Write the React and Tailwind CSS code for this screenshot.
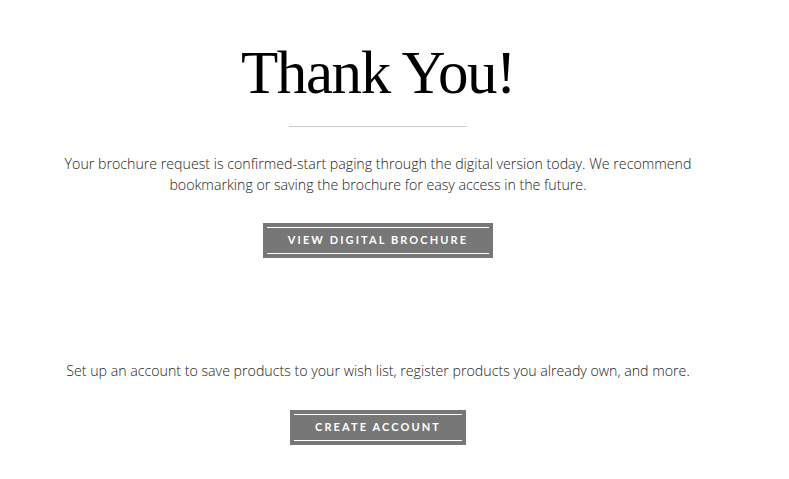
import React from 'react';

const OutlinedButton = ({ label, width }) => (
  <button
    className={`${width} h-[35px] bg-[#777777] p-[4px] cursor-pointer`}
  >
    <span
      className="flex items-center justify-center h-full border-y border-white text-white text-[11px] font-bold tracking-[2.1px] uppercase"
      style={{ fontFamily: 'Lato, sans-serif' }}
    >
      {label}
    </span>
  </button>
);

const App = () => {
  return (
    <div className="w-[789px] h-[479px] bg-white overflow-hidden">
      <div className="w-[756px] flex flex-col items-center text-center">
        <h1
          className="mt-[37px] text-[61px] leading-[72px] text-black tracking-[-1.4px]"
          style={{ fontFamily: '"Liberation Serif", serif' }}
        >
          Thank You!
        </h1>

        <div className="mt-[17px] w-[178px] h-px bg-[#cccccc]" />

        <p
          className="mt-[26px] text-[14.2px] leading-[21px] text-[#1a1a1a] font-light"
          style={{ fontFamily: '"Open Sans", sans-serif' }}
        >
          Your brochure request is confirmed-start paging through the digital version today. We recommend
          <br />
          bookmarking or saving the brochure for easy access in the future.
        </p>

        <div className="mt-[28px]">
          <OutlinedButton label="View Digital Brochure" width="w-[230px]" />
        </div>

        <p
          className="mt-[102px] text-[14.2px] leading-[21px] text-[#1a1a1a] font-light"
          style={{ fontFamily: '"Open Sans", sans-serif' }}
        >
          Set up an account to save products to your wish list, register products you already own, and more.
        </p>

        <div className="mt-[29px]">
          <OutlinedButton label="Create Account" width="w-[176px]" />
        </div>
      </div>
    </div>
  );
};

export default App;
